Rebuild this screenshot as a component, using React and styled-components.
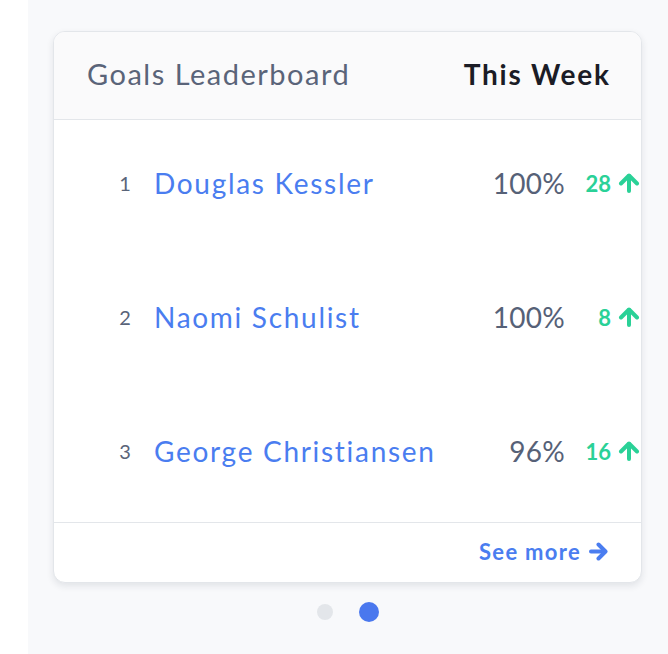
import React from "react";
import styled, { createGlobalStyle } from "styled-components";

const Global = createGlobalStyle`
  html, body { margin: 0; padding: 0; background: #ffffff; }
  body { font-family: "Lato", "Open Sans", sans-serif; }
  * { box-sizing: border-box; }
`;

const Page = styled.div`
  display: flex;
  width: 668px;
  height: 654px;
  overflow: hidden;
`;

const Gutter = styled.div`
  width: 28px;
  flex: none;
  background: #ffffff;
`;

const Main = styled.main`
  flex: 1;
  background: #f8f9fb;
  padding: 31px 26px 0 25px;
  display: flex;
  flex-direction: column;
`;

const Card = styled.section`
  width: 589px;
  height: 552px;
  background: #ffffff;
  border: 1px solid #e3e6ea;
  border-radius: 12px;
  box-shadow: 0 3px 7px rgba(30, 40, 60, 0.1);
  display: flex;
  flex-direction: column;
  overflow: hidden;
`;

const Header = styled.header`
  height: 88px;
  flex: none;
  background: #fafafb;
  border-bottom: 1px solid #e3e6ea;
  display: flex;
  align-items: center;
  justify-content: space-between;
  padding: 0 32px 4px 33px;
`;

const Title = styled.h2`
  margin: 0;
  font-size: 29px;
  font-weight: 400;
  letter-spacing: 1.5px;
  color: #5a6479;
`;

const Period = styled.span`
  font-size: 28px;
  font-weight: 700;
  letter-spacing: 1.8px;
  margin-right: -1.8px;
  color: #1b1c26;
`;

const List = styled.ol`
  margin: 0;
  padding: 0;
  list-style: none;
  flex: 1;
  display: grid;
  grid-template-rows: repeat(3, 1fr);
`;

const Row = styled.li`
  display: grid;
  grid-template-columns: 22px 1fr auto 76px;
  align-items: center;
  column-gap: 18px;
  padding-left: 60px;
  padding-bottom: 8px;
`;

const Rank = styled.span`
  font-size: 20px;
  color: #5a6479;
  text-align: center;
`;

const Name = styled.a`
  font-size: 28px;
  letter-spacing: 1.7px;
  color: #4a7df0;
  text-decoration: none;
`;

const Percent = styled.span`
  font-size: 28px;
  letter-spacing: 0.3px;
  color: #566177;
  text-align: right;
  margin-right: -18px;
`;

const Delta = styled.span`
  display: flex;
  align-items: center;
  justify-content: flex-end;
  gap: 7px;
  font-size: 22px;
  font-weight: 700;
  color: #2ad197;
  padding-right: 1px;
`;

const Footer = styled.footer`
  height: 60px;
  flex: none;
  border-top: 1px solid #e3e6ea;
  display: flex;
  align-items: center;
  justify-content: flex-end;
  padding: 0 32px 2px 0;
`;

const SeeMore = styled.a`
  display: flex;
  align-items: center;
  gap: 8px;
  font-size: 22px;
  font-weight: 700;
  letter-spacing: 1.3px;
  color: #4a7df0;
  text-decoration: none;
`;

const Dots = styled.div`
  display: flex;
  align-items: center;
  justify-content: center;
  gap: 26px;
  margin-top: 19px;
  width: 589px;
`;

const Dot = styled.span`
  width: ${(p) => (p.$active ? 20 : 16)}px;
  height: ${(p) => (p.$active ? 20 : 16)}px;
  border-radius: 50%;
  background: ${(p) => (p.$active ? "#4a78ee" : "#e3e6ea")};
`;

const UpArrow = () => (
  <svg width="22" height="20" viewBox="0 0 22 20" fill="none" stroke="currentColor"
    strokeWidth="4" strokeLinecap="round" strokeLinejoin="round">
    <path d="M11 18V3" />
    <path d="M3 10.5L11 2.5L19 10.5" />
  </svg>
);

const RightArrow = () => (
  <svg width="20" height="19" viewBox="0 0 20 19" fill="none" stroke="currentColor"
    strokeWidth="4" strokeLinecap="round" strokeLinejoin="round">
    <path d="M2 9.5H16" />
    <path d="M9.5 2.5L16.5 9.5L9.5 16.5" />
  </svg>
);

const rows = [
  { rank: 1, name: "Douglas Kessler", pct: "100%", delta: 28 },
  { rank: 2, name: "Naomi Schulist", pct: "100%", delta: 8 },
  { rank: 3, name: "George Christiansen", pct: "96%", delta: 16 },
];

export default function App() {
  return (
    <>
      <Global />
      <Page>
        <Gutter />
        <Main>
          <Card>
            <Header>
              <Title>Goals Leaderboard</Title>
              <Period>This Week</Period>
            </Header>
            <List>
              {rows.map((r) => (
                <Row key={r.rank}>
                  <Rank>{r.rank}</Rank>
                  <Name href="#">{r.name}</Name>
                  <Percent>{r.pct}</Percent>
                  <Delta>
                    {r.delta}
                    <UpArrow />
                  </Delta>
                </Row>
              ))}
            </List>
            <Footer>
              <SeeMore href="#">
                See more
                <RightArrow />
              </SeeMore>
            </Footer>
          </Card>
          <Dots>
            <Dot />
            <Dot $active />
          </Dots>
        </Main>
      </Page>
    </>
  );
}
